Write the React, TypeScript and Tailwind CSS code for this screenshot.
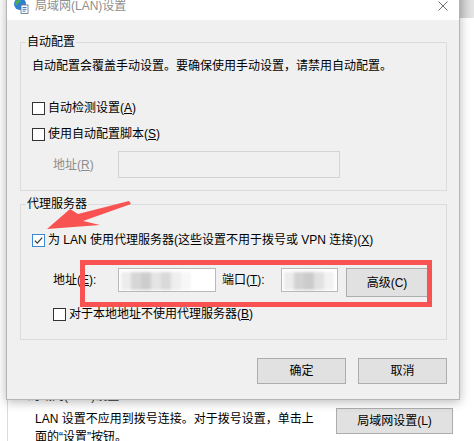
import React from 'react';

function Check({ checked }: { checked?: boolean }) {
  return (
    <span
      className={`w-[13px] h-[13px] shrink-0 bg-white border flex items-center justify-center ${
        checked ? 'border-[#3d86d4]' : 'border-[#333333]'
      }`}
    >
      {checked && (
        <svg width="11" height="11" viewBox="0 0 11 11">
          <path d="M1.8 5.6 L4.3 8.1 L9.2 2.6" fill="none" stroke="#3a3a3a" strokeWidth="1.3" />
        </svg>
      )}
    </span>
  );
}

function Btn({ children, className = '' }: { children: React.ReactNode; className?: string }) {
  return (
    <div className={`bg-[#e1e1e1] border border-[#adadad] flex items-center justify-center text-[12px] text-black ${className}`}>
      {children}
    </div>
  );
}

function Mosaic({ cells }: { cells: string[] }) {
  return (
    <div className="flex h-[18px] mt-[3px] ml-[2px] blur-[1.5px]">
      {cells.map((c, i) => (
        <div key={i} className="w-[10px] h-full" style={{ backgroundColor: c }} />
      ))}
    </div>
  );
}

function GlobeIcon() {
  return (
    <svg width="16" height="16" viewBox="0 0 16 16">
      <circle cx="7" cy="6" r="6" fill="#2f7fd6" />
      <path d="M3 3 Q6 1 8 3 Q7 5 5 5 Q4 8 2.5 7 Q1.5 5 3 3Z" fill="#4cae4c" />
      <path d="M9 7 Q11 6 12.5 7.5 Q11.5 10 9.5 10Z" fill="#4cae4c" />
      <rect x="8" y="7" width="7" height="8.5" fill="#ffffff" stroke="#5a6b80" strokeWidth="0.8" />
      <path d="M9.5 9.5 H13.5 M9.5 11.3 H13.5 M9.5 13.1 H12.5" stroke="#2f6fb8" strokeWidth="0.9" />
    </svg>
  );
}

export default function App() {
  return (
    <div className="relative w-[474px] h-[441px] overflow-hidden bg-white text-[12px] text-black font-['Liberation_Sans','Noto_Sans_CJK_SC',sans-serif]">
      {/* window behind the dialog */}
      <div className="h-[441px] flex flex-col">
        <div className="flex justify-end h-[18px] shrink-0">
          <div className="w-[16px] h-full bg-gradient-to-r from-[#c9c9c9] to-[#e6e6e6]" />
        </div>
        <div className="flex-1 ml-[7px] border-l border-[#dadada] bg-white pt-[371px]">
          <div className="pl-[20px] leading-[14px] text-[#333]">局域网(LAN)设置</div>
          <div className="flex items-start mt-[5px]">
            <div className="pl-[27px] pt-[2px] leading-[18px]">
              LAN 设置不应用到拨号连接。对于拨号设置，单击上
              <br />
              面的“设置”按钮。
            </div>
            <Btn className="ml-auto mr-[21px] w-[117px] h-[26px]">局域网设置(L)</Btn>
          </div>
        </div>
      </div>

      {/* LAN settings dialog */}
      <div className="absolute left-[6px] top-[-10px] w-[454px] border border-[#b5b5b5] shadow-[0_2px_10px_rgba(0,0,0,0.28)] bg-[#f0f0f0]">
        <div className="h-[29px] bg-white flex items-center pl-[6px] pr-[11px]">
          <GlobeIcon />
          <span className="ml-[6px] text-[#8f8f8f] leading-[14px]">局域网(LAN)设置</span>
          <svg className="ml-auto" width="10" height="10" viewBox="0 0 10 10">
            <path d="M0.5 0.5 L9.5 9.5 M9.5 0.5 L0.5 9.5" stroke="#6f6f6f" strokeWidth="1" />
          </svg>
        </div>

        <div className="pt-[15px] pl-[13px] pr-[12px] pb-[15px]">
          <fieldset className="border border-[#dcdcdc]">
            <legend className="ml-[5px] px-[1px] leading-[14px]">自动配置</legend>
            <div className="pl-[11px] pt-[9px] pb-[12px]">
              <p className="leading-[16px]">自动配置会覆盖手动设置。要确保使用手动设置，请禁用自动配置。</p>
              <div className="mt-[26px] flex items-center gap-[3px] h-[16px]">
                <Check />
                <span>
                  自动检测设置(<span className="underline">A</span>)
                </span>
              </div>
              <div className="mt-[10px] flex items-center gap-[3px] h-[16px]">
                <Check />
                <span>
                  使用自动配置脚本(<span className="underline">S</span>)
                </span>
              </div>
              <div className="mt-[9px] flex items-center pl-[21px]">
                <span className="w-[65px] text-[#8d8d8d]">
                  地址(<span className="underline">R</span>)
                </span>
                <div className="w-[222px] h-[27px] border border-[#d4d4d4] bg-[#f0f0f0]" />
              </div>
            </div>
          </fieldset>

          <fieldset className="border border-[#dcdcdc] mt-[6px]">
            <legend className="ml-[5px] px-[1px] leading-[14px]">代理服务器</legend>
            <div className="pl-[11px] pt-[21px] pb-[17px]">
              <div className="flex items-center gap-[3px] h-[16px]">
                <Check checked />
                <span>
                  为 LAN 使用代理服务器(这些设置不用于拨号或 VPN 连接)(<span className="underline">X</span>)
                </span>
              </div>
              <div className="mt-[20px] flex items-start pl-[21px]">
                <span className="w-[65px] h-[24px] flex items-center">
                  地址(<span className="underline">E</span>):
                </span>
                <div className="w-[98px] h-[24px] border border-[#b9b9b9] bg-white overflow-hidden">
                  <Mosaic cells={['#ececec', '#d6d6d6', '#cdcdcd', '#e4e4e4', '#d9d9d9', '#eeeeee', '#f7f7f7']} />
                </div>
                <span className="ml-[6px] w-[59px] h-[24px] flex items-center">
                  端口(<span className="underline">T</span>):
                </span>
                <div className="w-[57px] h-[24px] border border-[#b9b9b9] bg-white overflow-hidden">
                  <Mosaic cells={['#ececec', '#d2d2d2', '#cbcbcb', '#e1e1e1', '#f2f2f2']} />
                </div>
                <Btn className="ml-[8px] w-[82px] h-[29px]">高级(C)</Btn>
              </div>
              <div className="mt-[9px] flex items-center gap-[3px] h-[16px] pl-[21px]">
                <Check />
                <span>
                  对于本地地址不使用代理服务器(<span className="underline">B</span>)
                </span>
              </div>
            </div>
          </fieldset>

          <div className="mt-[18px] flex justify-end gap-[12px]">
            <Btn className="w-[89px] h-[26px]">确定</Btn>
            <Btn className="w-[89px] h-[26px]">取消</Btn>
          </div>
        </div>
      </div>

      {/* annotations */}
      <div className="absolute left-[80px] top-[260px] w-[352px] h-[47px] border-[5px] border-[#f95252] pointer-events-none" />
      <svg className="absolute left-0 top-0 pointer-events-none" width="474" height="441" viewBox="0 0 474 441">
        <polygon points="47,229 70,209 78,214 129,201 131,204 83,221 100,225" fill="#f95252" />
      </svg>
    </div>
  );
}
